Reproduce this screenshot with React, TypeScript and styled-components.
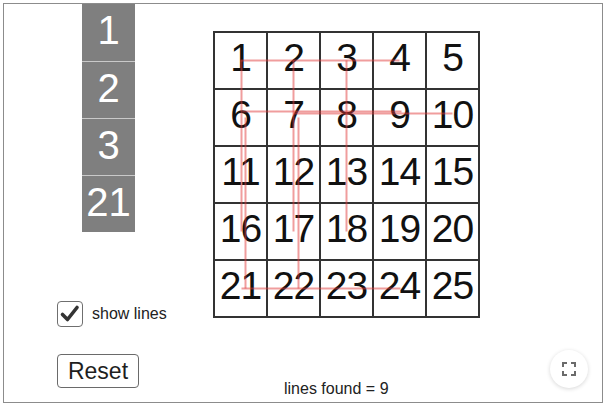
import React from "react";
import styled, { createGlobalStyle } from "styled-components";

const GlobalStyle = createGlobalStyle`
  html, body {
    margin: 0;
    padding: 0;
    background: #fff;
    font-family: "Liberation Sans", Arial, sans-serif;
  }
`;

const CELL_W = 51;
const CELL_H = 55;
const LINE = 2;

const Frame = styled.div`
  position: relative;
  box-sizing: border-box;
  width: 600px;
  height: 400px;
  margin: 3px 0 0 3px;
  border: 1px solid #8c8c8c;
  display: flex;
  background: #fff;
`;

const LeftCol = styled.div`
  width: 209px;
  display: flex;
  flex-direction: column;
  align-items: flex-start;
  padding-left: 53px;
  box-sizing: border-box;
`;

const TileStack = styled.div`
  margin-left: 25px;
  display: flex;
  flex-direction: column;
  width: 53px;
`;

const Tile = styled.div<{ $first?: boolean }>`
  box-sizing: border-box;
  height: 57px;
  padding-bottom: 4px;
  background: #7f7f7f;
  border-top: ${(p) => (p.$first ? "none" : "1px solid #c9c9c9")};
  color: #fff;
  font-size: 40px;
  display: flex;
  align-items: center;
  justify-content: center;
`;

const CheckRow = styled.label`
  margin-top: 69px;
  display: flex;
  align-items: center;
  gap: 9px;
  font-size: 16px;
  color: #222;
`;

const CheckBox = styled.span`
  box-sizing: border-box;
  width: 26px;
  height: 26px;
  border: 1.5px solid #6f6f6f;
  border-radius: 4px;
  display: flex;
  align-items: center;
  justify-content: center;
`;

const ResetButton = styled.button`
  margin-top: 27px;
  box-sizing: border-box;
  width: 82px;
  height: 34px;
  padding: 0;
  background: #fff;
  border: 1px solid #6a6a6a;
  border-radius: 4px;
  font-family: "Liberation Sans", Arial, sans-serif;
  font-size: 23px;
  color: #1e1e1e;
`;

const MainCol = styled.div`
  padding-top: 27px;
  display: flex;
  flex-direction: column;
  align-items: flex-start;
`;

const Board = styled.div`
  position: relative;
  display: grid;
  grid-template-columns: repeat(5, ${CELL_W}px);
  grid-template-rows: repeat(5, ${CELL_H}px);
  gap: ${LINE}px;
  padding: ${LINE}px;
  background: #333;
`;

const Cell = styled.div`
  background: #fff;
  color: #111;
  font-size: 39px;
  letter-spacing: -1px;
  display: flex;
  align-items: center;
  justify-content: center;
  padding-bottom: 5px;
  box-sizing: border-box;
`;

const LinesLayer = styled.svg`
  position: absolute;
  inset: 0;
  pointer-events: none;
`;

const Status = styled.div`
  margin-top: 62px;
  margin-left: 71px;
  font-size: 16px;
  color: #222;
`;

const FullscreenButton = styled.div`
  position: absolute;
  right: 14px;
  bottom: 14px;
  width: 38px;
  height: 38px;
  border-radius: 50%;
  background: #fff;
  box-shadow: 0 1px 4px rgba(0, 0, 0, 0.16);
  display: flex;
  align-items: center;
  justify-content: center;
`;

const tiles = ["1", "2", "3", "21"];

// found lines: start cell, end cell, and a small jitter offset
const found: { from: [number, number]; to: [number, number]; dx: number; dy: number }[] = [
  { from: [0, 0], to: [0, 3], dx: 0, dy: 0 },
  { from: [0, 0], to: [3, 0], dx: 1, dy: 0 },
  { from: [1, 0], to: [4, 0], dx: 5, dy: 0 },
  { from: [1, 0], to: [1, 3], dx: 2, dy: -6 },
  { from: [1, 1], to: [1, 4], dx: 0, dy: -4 },
  { from: [0, 1], to: [3, 1], dx: 0, dy: 0 },
  { from: [1, 1], to: [4, 1], dx: 5, dy: 0 },
  { from: [0, 2], to: [3, 2], dx: 0, dy: 0 },
  { from: [4, 0], to: [4, 3], dx: 1, dy: 0 },
];

const cx = (c: number) => LINE + c * (CELL_W + LINE) + CELL_W / 2;
const cy = (r: number) => LINE + r * (CELL_H + LINE) + CELL_H / 2;

const boardW = 5 * CELL_W + 6 * LINE;
const boardH = 5 * CELL_H + 6 * LINE;

const App: React.FC = () => {
  return (
    <>
      <GlobalStyle />
      <Frame>
        <LeftCol>
          <TileStack>
            {tiles.map((t, i) => (
              <Tile key={t} $first={i === 0}>
                {t}
              </Tile>
            ))}
          </TileStack>
          <CheckRow>
            <CheckBox>
              <svg width="22" height="22" viewBox="0 0 22 22">
                <path
                  d="M3.5 11.5 L8.5 16.5 L18 4.5"
                  fill="none"
                  stroke="#333"
                  strokeWidth="3.6"
                  strokeLinecap="round"
                  strokeLinejoin="round"
                />
              </svg>
            </CheckBox>
            show lines
          </CheckRow>
          <ResetButton>Reset</ResetButton>
        </LeftCol>
        <MainCol>
          <Board>
            {Array.from({ length: 25 }, (_, i) => (
              <Cell key={i}>{i + 1}</Cell>
            ))}
            <LinesLayer width={boardW} height={boardH}>
              {found.map((l, i) => (
                <line
                  key={i}
                  x1={cx(l.from[1]) + l.dx}
                  y1={cy(l.from[0]) + l.dy}
                  x2={cx(l.to[1]) + l.dx}
                  y2={cy(l.to[0]) + l.dy}
                  stroke="rgb(225, 60, 60)"
                  strokeOpacity={0.5}
                  strokeWidth={2}
                />
              ))}
            </LinesLayer>
          </Board>
          <Status>lines found = 9</Status>
        </MainCol>
        <FullscreenButton>
          <svg width="14" height="14" viewBox="0 0 14 14" fill="none" stroke="#6b6b6b" strokeWidth="2">
            <path d="M1 5 V1 H5 M9 1 H13 V5 M13 9 V13 H9 M5 13 H1 V9" />
          </svg>
        </FullscreenButton>
      </Frame>
    </>
  );
};

export default App;
